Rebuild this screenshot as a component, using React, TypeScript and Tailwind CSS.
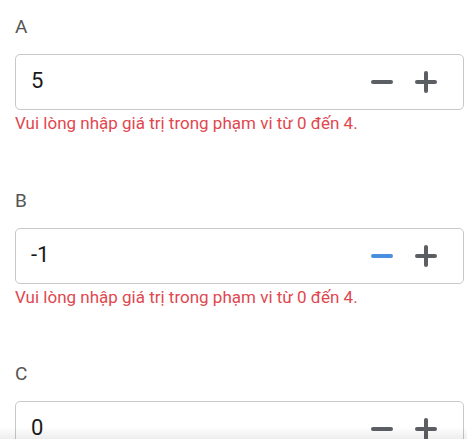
const fields = [
  { label: "A", value: "5", error: true, activeMinus: false },
  { label: "B", value: "-1", error: true, activeMinus: true },
  { label: "C", value: "0", error: false, activeMinus: false },
];

function MinusIcon({ color }: { color: string }) {
  return (
    <svg width="22" height="22" viewBox="0 0 22 22">
      <line x1="2" y1="11" x2="20" y2="11" stroke={color} strokeWidth="4" strokeLinecap="round" />
    </svg>
  );
}

function PlusIcon({ color }: { color: string }) {
  return (
    <svg width="22" height="22" viewBox="0 0 22 22">
      <line x1="2" y1="11" x2="20" y2="11" stroke={color} strokeWidth="4" strokeLinecap="round" />
      <line x1="11" y1="2" x2="11" y2="20" stroke={color} strokeWidth="4" strokeLinecap="round" />
    </svg>
  );
}

export default function App() {
  return (
    <div className="relative h-[439px] w-full overflow-hidden bg-white font-['Roboto','Noto_Sans',sans-serif]">
      <div className="pl-[15px] pr-[3px] pt-[15px]">
        {fields.map((f) => (
          <div key={f.label} className="h-[173.5px]">
            <div className="text-[19px] leading-[24px] text-[#555]">{f.label}</div>
            <div className="mt-[15px] flex h-[56px] items-center rounded-[5px] border border-[#c8c8c8] pl-[15px] pr-[15px]">
              <span className="flex-1 pb-[3px] text-[22px] text-[#1a1a1a]">{f.value}</span>
              <button className="flex h-[44px] w-[44px] items-center justify-center">
                <MinusIcon color={f.activeMinus ? "#4a8fdf" : "#5b5e63"} />
              </button>
              <button className="flex h-[44px] w-[44px] items-center justify-center">
                <PlusIcon color="#5b5e63" />
              </button>
            </div>
            {f.error && (
              <div className="mt-[1px] text-[17px] leading-[24px] text-[#e0474f]">
                Vui lòng nhập giá trị trong phạm vi từ 0 đến 4.
              </div>
            )}
          </div>
        ))}
      </div>
      <div className="pointer-events-none absolute bottom-0 left-0 h-[12px] w-full bg-gradient-to-b from-transparent to-black/[0.07]" />
    </div>
  );
}
